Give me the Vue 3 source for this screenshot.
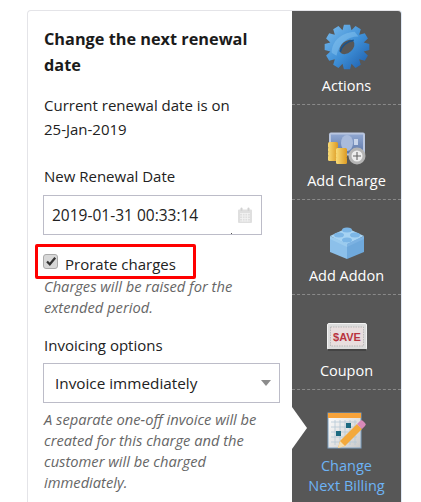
<template>
  <div class="page">
    <div class="card">
      <div class="form">
        <h3 class="title">Change the next renewal date</h3>
        <p class="current">Current renewal date is on<br />25-Jan-2019</p>

        <label class="label date-label">New Renewal Date</label>
        <div class="field date-field">
          <span>2019-01-31 00:33:14</span>
          <svg class="cal-icon" viewBox="0 0 14 16" width="14" height="16">
            <path d="M1 2.500h12a1 1 0 0 1 1 1V15a1 1 0 0 1-1 1H1a1 1 0 0 1-1-1V3.500a1 1 0 0 1 1-1z" fill="#dfdfdf" />
            <rect x="2.500" y="0.500" width="2" height="3.500" rx="1" fill="#d2d2d2" />
            <rect x="9.500" y="0.500" width="2" height="3.500" rx="1" fill="#d2d2d2" />
            <path d="M2 6.500h10M2 9h10M2 11.500h10M2 14h10M4.500 6v8.500M7 6v8.500M9.500 6v8.500" stroke="#f2f2f2" stroke-width="0.800" fill="none" />
          </svg>
          <i class="dot"></i>
        </div>

        <div class="check-row">
          <span class="checkbox">
            <svg viewBox="0 0 12 12" width="12" height="12">
              <path d="M2 6.500l2.800 2.800L10.200 2.800" fill="none" stroke="#333" stroke-width="2.200" />
            </svg>
          </span>
          <span class="check-label">Prorate charges</span>
          <div class="highlight"></div>
        </div>
        <p class="hint">Charges will be raised for the extended period.</p>

        <label class="label options-label">Invoicing options</label>
        <div class="field select-field">
          <span>Invoice immediately</span>
          <i class="caret"></i>
        </div>
        <p class="hint">A separate one-off invoice will be created for this charge and the customer will be charged immediately.</p>
      </div>

      <nav class="side">
        <a class="side-item">
          <svg class="ico" viewBox="0 0 48 48" width="46" height="46">
            <defs>
              <linearGradient id="gear" x1="0" y1="0" x2="1" y2="1">
                <stop offset="0" stop-color="#7cbcec" />
                <stop offset="0.55" stop-color="#3d8ed6" />
                <stop offset="1" stop-color="#1c5aa8" />
              </linearGradient>
            </defs>
            <path fill="url(#gear)" :d="gearPath" />
            <path fill="#86c4f0" opacity="0.5" d="M8 30C8 18 18 9 32 8l4 5C24 13 16 20 13 33z" />
            <ellipse cx="24" cy="24" rx="9" ry="6" transform="rotate(-42 24 24)" fill="#575757" />
            <path d="M17 29c1-6 7-11 14-12" stroke="#17528c" stroke-width="1.600" fill="none" />
          </svg>
          <span>Actions</span>
        </a>

        <a class="side-item">
          <svg class="ico" viewBox="0 0 38 33" width="38" height="33">
            <defs>
              <linearGradient id="coin" x1="0" y1="0" x2="1" y2="0">
                <stop offset="0" stop-color="#f9dc78" />
                <stop offset="1" stop-color="#dc9a22" />
              </linearGradient>
              <linearGradient id="bill" x1="0" y1="0" x2="0" y2="1">
                <stop offset="0" stop-color="#8fa6d0" />
                <stop offset="1" stop-color="#5f78a8" />
              </linearGradient>
            </defs>
            <rect x="1" y="0.500" width="36" height="23" rx="2" fill="#b9c6df" />
            <rect x="3" y="2.500" width="32" height="19" fill="url(#bill)" />
            <ellipse cx="19" cy="11" rx="6" ry="8" fill="#a9bbdc" />
            <rect x="26" y="7" width="4" height="6" fill="#c8d4ea" />
            <rect x="0" y="10" width="10" height="6" rx="1.500" fill="url(#coin)" />
            <rect x="0" y="15" width="10" height="5" rx="1.500" fill="url(#coin)" />
            <rect x="0" y="19" width="10" height="5" rx="1.500" fill="url(#coin)" />
            <rect x="0" y="23" width="10" height="6" rx="1.500" fill="url(#coin)" />
            <rect x="8" y="16" width="11" height="6" rx="1.500" fill="url(#coin)" />
            <rect x="8" y="21" width="11" height="5" rx="1.500" fill="url(#coin)" />
            <rect x="8" y="25" width="11" height="7" rx="1.500" fill="url(#coin)" />
            <circle cx="29" cy="24" r="8.500" fill="#b4b4b4" />
            <circle cx="29" cy="24" r="5.500" fill="#ededed" />
            <path d="M29 20v8M25 24h8" stroke="#666" stroke-width="1.100" />
          </svg>
          <span>Add Charge</span>
        </a>

        <a class="side-item">
          <svg class="ico" viewBox="0 0 36 36" width="36" height="36">
            <path d="M18 8L35 15v13L18 35z" fill="#6fa9dc" />
            <path d="M18 8L1 15v13l17 7z" fill="#8cc0ea" />
            <path d="M18 4L35 12 18 20 1 12z" fill="#a6d3f3" />
            <path d="M18 20L35 12v3L18 23z" fill="#7cb2e2" />
            <path d="M18 20L1 12v3l17 8z" fill="#9bcbee" />
            <ellipse cx="18" cy="6" rx="5" ry="2.500" fill="#7cb6e6" />
            <ellipse cx="10" cy="11" rx="5" ry="2.500" fill="#7cb6e6" />
            <ellipse cx="26" cy="11" rx="5" ry="2.500" fill="#7cb6e6" />
            <ellipse cx="18" cy="16" rx="5" ry="2.500" fill="#7cb6e6" />
          </svg>
          <span>Add Addon</span>
        </a>

        <a class="side-item">
          <svg class="ico coupon-ico" viewBox="0 0 40 28" width="40" height="28">
            <rect x="0.500" y="0.500" width="39" height="26" rx="1.500" fill="#dcdcdc" stroke="#f2f2f2" />
            <rect x="3.500" y="4" width="33" height="19" fill="#e8dede" stroke="#aaa" stroke-width="0.700" stroke-dasharray="1.500 1" />
            <rect x="1" y="26" width="38" height="2" fill="#444" />
            <text x="20" y="18" text-anchor="middle" class="save">$AVE</text>
          </svg>
          <span>Coupon</span>
        </a>

        <a class="side-item active">
          <svg class="ico" viewBox="0 0 40 38" width="40" height="38">
            <defs>
              <linearGradient id="sheet" x1="0" y1="0" x2="1" y2="1">
                <stop offset="0" stop-color="#ffffff" />
                <stop offset="1" stop-color="#c9c9c9" />
              </linearGradient>
            </defs>
            <rect x="1" y="1" width="33" height="35" fill="url(#sheet)" stroke="#7d9fc0" />
            <rect x="1" y="1" width="33" height="5" fill="#f7a33b" />
            <path d="M4 10h26M4 15h26M4 20h26M4 25h26M4 30h26M8 8v25M13 8v25M18 8v25M23 8v25M28 8v25" stroke="#b5c8d6" stroke-width="0.800" />
            <rect x="19" y="11" width="5" height="5" fill="#1d6a80" />
            <rect x="9" y="19" width="5" height="5" fill="#1d6a80" />
            <path d="M11 36l2-7L30 12l5 5-17 17z" fill="#f3a93c" />
            <path d="M11 36l2-7 5 5z" fill="#f6deb0" />
            <path d="M30 12l3-3a2 2 0 0 1 3 0l2 2a2 2 0 0 1 0 3l-3 3z" fill="#d889b8" />
          </svg>
          <span>Change<br />Next Billing</span>
        </a>
      </nav>
    </div>
  </div>
</template>

<script setup>
// 12 toothed gear, drawn around the 48x48 viewBox centre
const teeth = 12
const points = []
for (let i = 0; i < teeth; i++) {
  const a = (i / teeth) * Math.PI * 2
  const step = (Math.PI * 2) / teeth
  const offsets = [[-0.5, 18], [-0.26, 23.500], [0.26, 23.500], [0.5, 18]]
  for (const [o, r] of offsets) {
    const x = 24 + Math.cos(a + o * step) * r
    const y = 24 + Math.sin(a + o * step) * r
    points.push(x.toFixed(1) + ' ' + y.toFixed(1))
  }
}
const gearPath = 'M' + points.join('L') + 'z'
</script>

<style>
html, body {
  margin: 0;
  background: #fff;
  overflow: hidden;
}
</style>

<style scoped>
.page {
  height: 502px;
  padding: 10px 0 0 27px;
  box-sizing: border-box;
  overflow: hidden;
  font-family: "Open Sans", "Noto Sans", "Liberation Sans", sans-serif;
  color: #222;
}

.card {
  display: flex;
  width: 375px;
  height: 500px;
  border: 1px solid #e4e4e8;
  border-right-color: #dfe8f5;
  border-radius: 4px 4px 0 0;
  box-sizing: border-box;
  overflow: hidden;
}

.form {
  width: 264px;
  flex-shrink: 0;
  padding: 15px 12px 0 15px;
  box-sizing: border-box;
}

.title {
  margin: 0 0 15px;
  padding-left: 1px;
  font-size: 16.300px;
  font-weight: 700;
  line-height: 26px;
  color: #1b1b1b;
}

.current {
  margin: 0 0 23px;
  padding-left: 1px;
  font-size: 15px;
  line-height: 24px;
}

.label {
  display: block;
  padding-left: 1px;
  font-size: 15px;
  line-height: 24px;
  margin-bottom: 6px;
}

.date-label {
  margin-bottom: 7px;
}

.field {
  position: relative;
  display: flex;
  align-items: center;
  justify-content: space-between;
  height: 40px;
  box-sizing: border-box;
  border: 1px solid #bcbcc8;
  font-size: 15.300px;
  color: #222;
}

.date-field {
  width: 219px;
  padding: 0 9px 0 8px;
  font-size: 15.500px;
}

.select-field {
  width: 237px;
  padding: 0 8px 0 11px;
}

.cal-icon {
  flex-shrink: 0;
}

.dot {
  position: absolute;
  right: 29px;
  bottom: 0;
  width: 1px;
  height: 1px;
  background: #555;
}

.caret {
  width: 0;
  height: 0;
  border-left: 5px solid transparent;
  border-right: 5px solid transparent;
  border-top: 6px solid #8c8c8c;
}

.check-row {
  position: relative;
  display: flex;
  align-items: center;
  height: 24px;
  margin-top: 17px;
  font-size: 15px;
}

.checkbox {
  display: flex;
  align-items: center;
  justify-content: center;
  width: 13px;
  height: 13px;
  margin-top: -6px;
  background: #d8d8d8;
  border: 1px solid #aaa;
  border-radius: 3px;
}

.check-label {
  margin-left: 7px;
}

.highlight {
  position: absolute;
  left: -8px;
  top: -8px;
  width: 161px;
  height: 35px;
  box-sizing: border-box;
  border: 3px solid #f00;
  border-radius: 2px;
}

.hint {
  margin: 0;
  padding-left: 1px;
  font-size: 14.700px;
  font-style: italic;
  line-height: 21px;
  color: #666;
}

.options-label {
  margin-top: 15px;
}

.select-field + .hint {
  margin-top: 6px;
}

.side {
  flex: 1;
  background: #575757;
}

.side-item {
  display: flex;
  flex-direction: column;
  align-items: center;
  justify-content: flex-end;
  height: 95px;
  box-sizing: border-box;
  padding-bottom: 8px;
  border-bottom: 1px dashed #8a8a8a;
  font-size: 14.500px;
  line-height: 20px;
  color: #fff;
  text-align: center;
}

.side-item:first-child {
  height: 94px;
}

.ico {
  flex-shrink: 0;
  margin-bottom: 6px;
}

.coupon-ico {
  margin-bottom: 10px;
}

.save {
  font-family: "Liberation Sans", sans-serif;
  font-size: 11px;
  font-weight: 700;
  fill: #b8343f;
}

.active {
  position: relative;
  height: 112px;
  justify-content: flex-start;
  padding: 22px 0 0;
  border-bottom: none;
  color: #6db3f5;
}

.active::before {
  content: "";
  position: absolute;
  left: 0;
  top: 17px;
  border-left: 15px solid #fff;
  border-top: 21px solid transparent;
  border-bottom: 21px solid transparent;
}
</style>
